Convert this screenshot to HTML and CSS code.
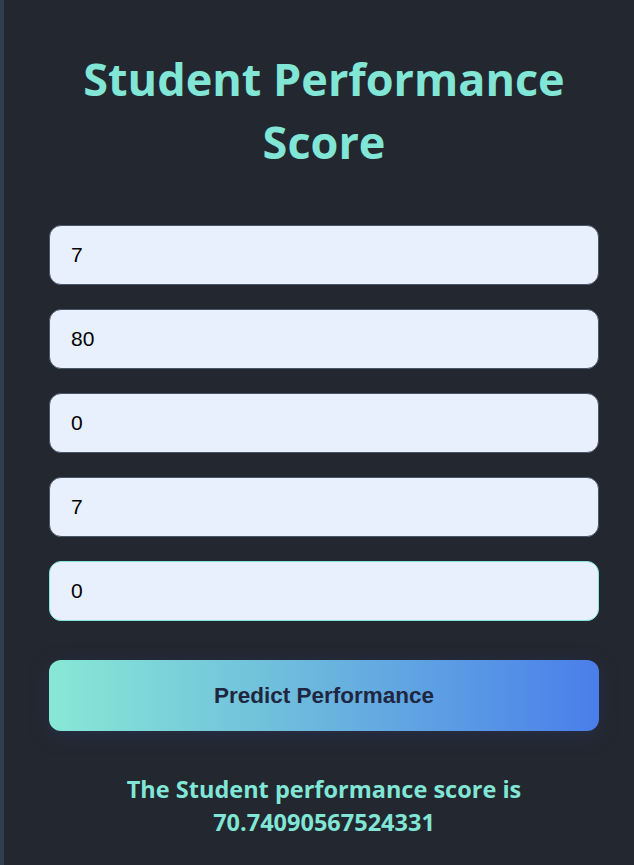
FILE: index.html
```html
<!DOCTYPE html>
<html>
<head>
<meta charset="utf-8">
<link rel="stylesheet" href="styles.css">
</head>
<body>
<main class="card">
  <h1 class="title">Student Performance Score</h1>
  <form class="form">
    <input class="field" type="text" value="7">
    <input class="field" type="text" value="80">
    <input class="field" type="text" value="0">
    <input class="field" type="text" value="7">
    <input class="field field-focus" type="text" value="0">
    <button class="btn" type="button">Predict Performance</button>
  </form>
  <p class="result">The Student performance score is 70.74090567524331</p>
</main>
</body>
</html>
```

FILE: styles.css
```css
html, body {
  margin: 0;
  padding: 0;
  height: 100%;
}
body {
  background: #232730;
  border-left: 4px solid #2e4050;
  padding-left: 10px;
  box-sizing: border-box;
  font-family: "Open Sans", "Noto Sans", sans-serif;
}
.card {
  width: 550px;
  margin: 0 auto;
  padding-top: 47px;
}
.title {
  margin: 0;
  color: #81e6d5;
  font-family: "Open Sans", sans-serif;
  font-weight: 700;
  font-size: 45px;
  line-height: 63px;
  text-align: center;
}
.form {
  display: flex;
  flex-direction: column;
  gap: 24px;
  margin-top: 52px;
}
.field {
  box-sizing: border-box;
  height: 60px;
  width: 100%;
  margin: 0;
  padding: 0 21px;
  border: 1px solid #4a5568;
  border-radius: 12px;
  background: #e8f0fe;
  font-family: "Liberation Sans", Arial, sans-serif;
  font-size: 21px;
  color: #000;
  outline: none;
}
.field-focus {
  border-color: #81e6d9;
}
.btn {
  margin-top: 15px;
  height: 71px;
  width: 100%;
  border: none;
  border-radius: 12px;
  background: linear-gradient(90deg, #88e8d5 0%, #70c0dc 40%, #4a7eea 100%);
  color: #1e2640;
  font-family: "Liberation Sans", Arial, sans-serif;
  font-weight: 700;
  font-size: 22.5px;
  box-shadow: 0 4px 18px rgba(40, 55, 90, 0.55);
  cursor: pointer;
}
.result {
  margin: 42px 40px 0;
  color: #81e6d5;
  font-family: "Open Sans", sans-serif;
  font-weight: 700;
  font-size: 23.5px;
  line-height: 33px;
  text-align: center;
}
```
